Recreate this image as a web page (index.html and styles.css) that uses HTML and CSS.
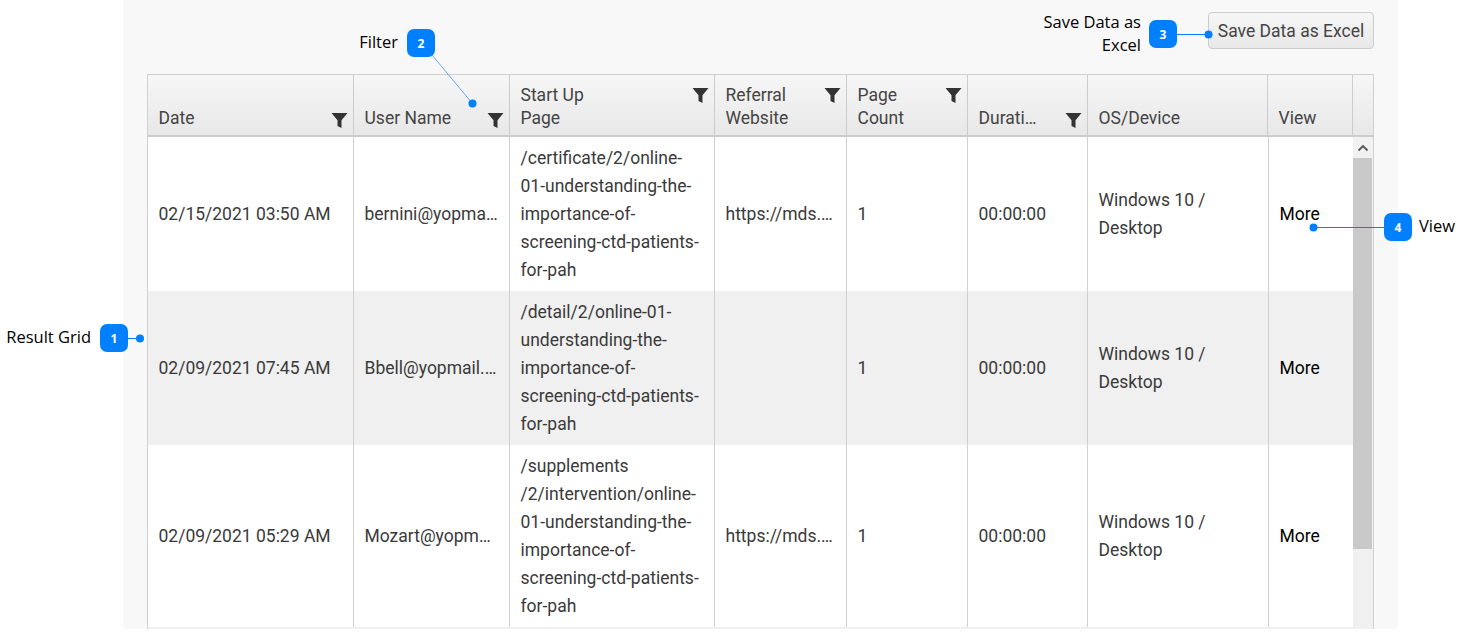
FILE: index.html
```html
<!DOCTYPE html>
<html lang="en">
<head>
<meta charset="utf-8">
<title>Result Grid</title>
<link rel="stylesheet" href="styles.css">
</head>
<body>
<main class="panel">
  <div class="toolbar"><button class="save-btn" type="button">Save Data as Excel</button></div>
  <section class="grid">
    <div class="head">
      <div class="th"><span class="th-text">Date</span><svg class="funnel" viewBox="0 0 17 17"><path d="M.5 1h16L10.500 8.200V16L6.500 14V8.200z"/></svg></div>
      <div class="th"><span class="th-text">User Name</span><svg class="funnel" viewBox="0 0 17 17"><path d="M.5 1h16L10.500 8.200V16L6.500 14V8.200z"/></svg></div>
      <div class="th"><span class="th-text">Start Up<br>Page</span><svg class="funnel top" viewBox="0 0 17 17"><path d="M.5 1h16L10.500 8.200V16L6.500 14V8.200z"/></svg></div>
      <div class="th"><span class="th-text">Referral<br>Website</span><svg class="funnel top" viewBox="0 0 17 17"><path d="M.5 1h16L10.500 8.200V16L6.500 14V8.200z"/></svg></div>
      <div class="th"><span class="th-text">Page<br>Count</span><svg class="funnel top" viewBox="0 0 17 17"><path d="M.5 1h16L10.500 8.200V16L6.500 14V8.200z"/></svg></div>
      <div class="th"><span class="th-text clip">Duration</span><svg class="funnel" viewBox="0 0 17 17"><path d="M.5 1h16L10.500 8.200V16L6.500 14V8.200z"/></svg></div>
      <div class="th"><span class="th-text">OS/Device</span></div>
      <div class="th"><span class="th-text">View</span></div>
      <div class="th th-end"></div>
    </div>
    <div class="body">
      <div class="rows">
        <div class="row">
          <div class="td"><span class="clip">02/15/2021 03:50 AM</span></div>
          <div class="td tight"><span class="clip">bernini@yopmail.com</span></div>
          <div class="td path">/certificate/2/online-<br>01-understanding-the-<br>importance-of-<br>screening-ctd-patients-<br>for-pah</div>
          <div class="td"><span class="clip">https://mds.example.org</span></div>
          <div class="td">1</div>
          <div class="td">00:00:00</div>
          <div class="td">Windows 10 /<br>Desktop</div>
          <div class="td more">More</div>
        </div>
        <div class="row alt">
          <div class="td"><span class="clip">02/09/2021 07:45 AM</span></div>
          <div class="td tight"><span class="clip">Bbell@yopmail.com.au</span></div>
          <div class="td path">/detail/2/online-01-<br>understanding-the-<br>importance-of-<br>screening-ctd-patients-<br>for-pah</div>
          <div class="td"></div>
          <div class="td">1</div>
          <div class="td">00:00:00</div>
          <div class="td">Windows 10 /<br>Desktop</div>
          <div class="td more">More</div>
        </div>
        <div class="row">
          <div class="td"><span class="clip">02/09/2021 05:29 AM</span></div>
          <div class="td tight"><span class="clip">Mozart@yopmail.com</span></div>
          <div class="td path">/supplements<br>/2/intervention/online-<br>01-understanding-the-<br>importance-of-<br>screening-ctd-patients-<br>for-pah</div>
          <div class="td"><span class="clip">https://mds.example.org</span></div>
          <div class="td">1</div>
          <div class="td">00:00:00</div>
          <div class="td">Windows 10 /<br>Desktop</div>
          <div class="td more">More</div>
        </div>
      </div>
      <div class="scrollbar">
        <div class="sb-arrow"><svg viewBox="0 0 12 8" class="chev"><path d="M1.500 6.500L6 2l4.500 4.500"/></svg></div>
        <div class="sb-thumb"></div>
      </div>
    </div>
  </section>
</main>

<svg class="leaders" viewBox="0 0 1462 641" aria-hidden="true">
  <path class="thin" d="M432 55L472 103"/>
  <path d="M128 338.500H140M1177 34.500H1208M1313 227.500H1384"/>
  <circle cx="472.500" cy="103.500" r="4"/>
  <circle cx="140" cy="338.500" r="4"/>
  <circle cx="1208.500" cy="34.500" r="4"/>
  <circle cx="1313.500" cy="227.500" r="4"/>
</svg>

<div class="callout c1"><span class="label">Result Grid</span><span class="badge">1</span></div>
<div class="callout c2"><span class="label">Filter</span><span class="badge">2</span></div>
<div class="callout c3"><span class="label">Save Data as<br>Excel</span><span class="badge">3</span></div>
<div class="callout c4"><span class="badge">4</span><span class="label">View</span></div>
</body>
</html>
```
FILE: styles.css
```css
* { box-sizing: border-box; }
html, body { margin: 0; height: 641px; overflow: hidden; background: #fff; }
body { position: relative; font-family: Roboto, "Liberation Sans", sans-serif; color: #333; }

.panel {
  width: 1275px;
  height: 629px;
  margin-left: 123px;
  padding: 12px 24px 0;
  background: #f8f8f8;
  overflow: hidden;
}
.toolbar { display: flex; justify-content: flex-end; height: 62px; }
.save-btn {
  width: 166px;
  height: 37px;
  padding: 0;
  border: 1px solid #ccc;
  border-radius: 4px;
  background: linear-gradient(#f6f6f6, #e8e8e8);
  color: #444;
  font: 17.500px Roboto, sans-serif;
}

.grid { border: 1px solid #d0d0d0; border-bottom: 0; background: #fff; }

.head {
  display: grid;
  grid-template-columns: 206px 156px 205px 132px 121px 120px 180px 85px 1fr;
  height: 62px;
  background: linear-gradient(#f6f6f6, #e9e8e8);
  border-bottom: 2px solid #ccc;
}
.th {
  position: relative;
  display: flex;
  align-items: flex-end;
  justify-content: space-between;
  gap: 4px;
  padding: 0 5px 5px 10.500px;
  border-right: 1px solid #ccc;
  font-size: 17.500px;
  line-height: 23px;
  color: #444;
}
.th:last-child { border-right: 0; }
.th-text { min-width: 0; }
.th .clip { display: block; width: 60px; overflow: hidden; white-space: nowrap; text-overflow: ellipsis; }
.funnel { flex: none; width: 17px; height: 17px; margin-bottom: 1px; fill: #333; }
.funnel.top { align-self: flex-start; margin-bottom: 0; position: relative; top: 12px; }

.body { display: flex; height: 492px; overflow: hidden; }
.rows { width: 1205px; flex: none; background: #f0f0f0; }
.row {
  display: grid;
  grid-template-columns: 206px 156px 205px 132px 121px 120px 181px 1fr;
  background: #fff;
}
.row.alt { background: #f0f0f0; }
.td {
  display: flex;
  flex-direction: column;
  justify-content: center;
  min-width: 0;
  padding: 7px 10.500px;
  border-right: 1px solid #d0d0d0;
  font-size: 17.500px;
  line-height: 28px;
  color: #3a3a3a;
}
.td.path { display: block; padding-right: 0; white-space: nowrap; }
.td.tight { padding-right: 9px; }
.td:last-child { border-right: 0; }
.clip { display: block; overflow: hidden; white-space: nowrap; text-overflow: ellipsis; }
.more { color: #000; }

.scrollbar { flex: 1; background: #f0f0f0; }
.sb-arrow { display: flex; align-items: center; justify-content: center; height: 21px; background: #f1f1f1; }
.chev { width: 12px; height: 8px; fill: none; stroke: #555; stroke-width: 1.800; }
.sb-thumb { height: 391px; margin-right: 1px; background: #c9c9c9; }

.leaders { position: absolute; left: 0; top: 0; width: 1462px; height: 641px; pointer-events: none; }
.leaders path { fill: none; stroke: #0080ff; stroke-width: 1; }
.leaders path.thin { stroke: #6ea8f5; }
.leaders circle { fill: #0080ff; }

.callout {
  position: absolute;
  display: flex;
  align-items: center;
  gap: 9px;
  font-family: "Open Sans", sans-serif;
  font-size: 16.500px;
  line-height: 23px;
  color: #000;
}
.label { display: block; margin-top: -4px; }
.badge {
  flex: none;
  display: flex;
  align-items: center;
  justify-content: center;
  width: 28px;
  height: 28px;
  border-radius: 7px;
  background: #0080ff;
  color: #fff;
  font-size: 12px;
  font-weight: 700;
}
.c1 { right: 1334px; top: 324px; }
.c2 { right: 1027px; top: 29px; }
.c3 { right: 285px; top: 10px; gap: 8px; text-align: right; }
.c3 .badge { position: relative; top: 1px; }
.c3 .label { margin-top: 0; }
.c4 { left: 1384px; top: 213px; gap: 7px; }
```
